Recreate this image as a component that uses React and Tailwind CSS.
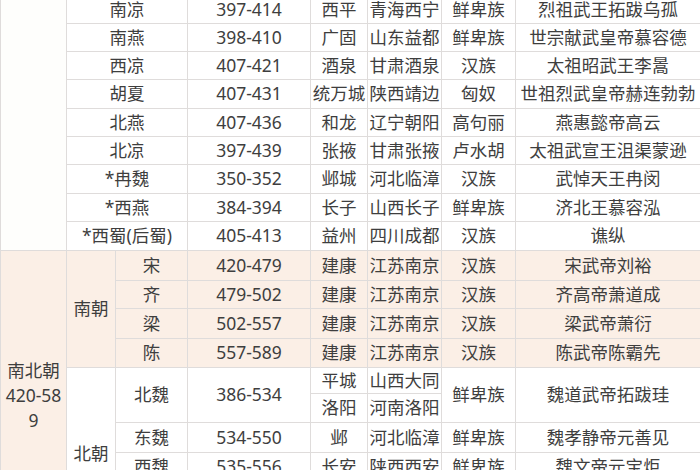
import React from 'react';

// 十六国 / 南北朝 dynasty table (cropped view)
const top = [
  ['南凉', '397-414', '西平', '青海西宁', '鲜卑族', '烈祖武王拓跋乌孤'],
  ['南燕', '398-410', '广固', '山东益都', '鲜卑族', '世宗献武皇帝慕容德'],
  ['西凉', '407-421', '酒泉', '甘肃酒泉', '汉族', '太祖昭武王李暠'],
  ['胡夏', '407-431', '统万城', '陕西靖边', '匈奴', '世祖烈武皇帝赫连勃勃'],
  ['北燕', '407-436', '和龙', '辽宁朝阳', '高句丽', '燕惠懿帝高云'],
  ['北凉', '397-439', '张掖', '甘肃张掖', '卢水胡', '太祖武宣王沮渠蒙逊'],
  ['*冉魏', '350-352', '邺城', '河北临漳', '汉族', '武悼天王冉闵'],
  ['*西燕', '384-394', '长子', '山西长子', '鲜卑族', '济北王慕容泓'],
  ['*西蜀(后蜀)', '405-413', '益州', '四川成都', '汉族', '谯纵'],
];

const south = [
  ['宋', '420-479', '建康', '江苏南京', '汉族', '宋武帝刘裕'],
  ['齐', '479-502', '建康', '江苏南京', '汉族', '齐高帝萧道成'],
  ['梁', '502-557', '建康', '江苏南京', '汉族', '梁武帝萧衍'],
  ['陈', '557-589', '建康', '江苏南京', '汉族', '陈武帝陈霸先'],
];

const north = [
  ['东魏', '534-550', '邺', '河北临漳', '鲜卑族', '魏孝静帝元善见'],
  ['西魏', '535-556', '长安', '陕西西安', '鲜卑族', '魏文帝元宝炬'],
  ['北齐', '550-577', '邺', '河北临漳', '鲜卑族', '北齐文宣帝高洋'],
  ['北周', '557-581', '长安', '陕西西安', '鲜卑族', '北周孝闵帝宇文觉'],
];

const Cell = ({ children, className = '' }) => (
  <div className={`flex items-center justify-center whitespace-nowrap ${className}`}>
    {children}
  </div>
);

const Row = ({ r, bg }) => (
  <>
    <Cell className={bg}>{r[0]}</Cell>
    <Cell className={bg}>{r[1]}</Cell>
    <Cell className={bg}>{r[2]}</Cell>
    <Cell className={bg}>{r[3]}</Cell>
    <Cell className={bg}>{r[4]}</Cell>
    <Cell className={bg}>{r[5]}</Cell>
  </>
);

export default function App() {
  return (
    <div className="h-[470px] w-[700px] overflow-hidden bg-white">
      <div
        className="-mt-[5px] grid gap-px bg-[#dfdcdb] pl-px pt-px text-[17.5px] leading-none text-[#3e3e3e] grid-cols-[65px_48px_71px_122px_56px_73px_73px_1fr] grid-rows-[27px_27px_27px_28px_27px_27px_28px_27px_28px_29px_27px_29px_28px_25px_28px_29px_28px_28px_28px]"
        style={{ fontFamily: '"Noto Sans", "Noto Sans CJK SC", sans-serif' }}
      >
        {/* 十六国 block, label sits above the visible area */}
        <Cell className="row-span-9 bg-[#fefefc]" />
        {top.map((r) => (
          <React.Fragment key={r[0]}>
            <Cell className="col-span-2 bg-white">{r[0]}</Cell>
            <Cell className="bg-white">{r[1]}</Cell>
            <Cell className="bg-white">{r[2]}</Cell>
            <Cell className="bg-white">{r[3]}</Cell>
            <Cell className="bg-white">{r[4]}</Cell>
            <Cell className="bg-white">{r[5]}</Cell>
          </React.Fragment>
        ))}

        <Cell className="row-span-10 bg-[#fbefe6] text-center leading-[25px]">
          <span>
            南北朝
            <br />
            420-58
            <br />9
          </span>
        </Cell>
        <Cell className="row-span-4 bg-[#fbefe6]">南朝</Cell>
        {south.map((r) => (
          <Row key={r[0]} r={r} bg="bg-[#fbefe6]" />
        ))}

        <Cell className="row-span-6 bg-white">北朝</Cell>
        <Cell className="row-span-2 bg-white">北魏</Cell>
        <Cell className="row-span-2 bg-white">386-534</Cell>
        <Cell className="bg-white">平城</Cell>
        <Cell className="bg-white">山西大同</Cell>
        <Cell className="row-span-2 bg-white">鲜卑族</Cell>
        <Cell className="row-span-2 bg-white">魏道武帝拓跋珪</Cell>
        <Cell className="bg-white">洛阳</Cell>
        <Cell className="bg-white">河南洛阳</Cell>
        {north.map((r) => (
          <Row key={r[0]} r={r} bg="bg-white" />
        ))}
      </div>
    </div>
  );
}
